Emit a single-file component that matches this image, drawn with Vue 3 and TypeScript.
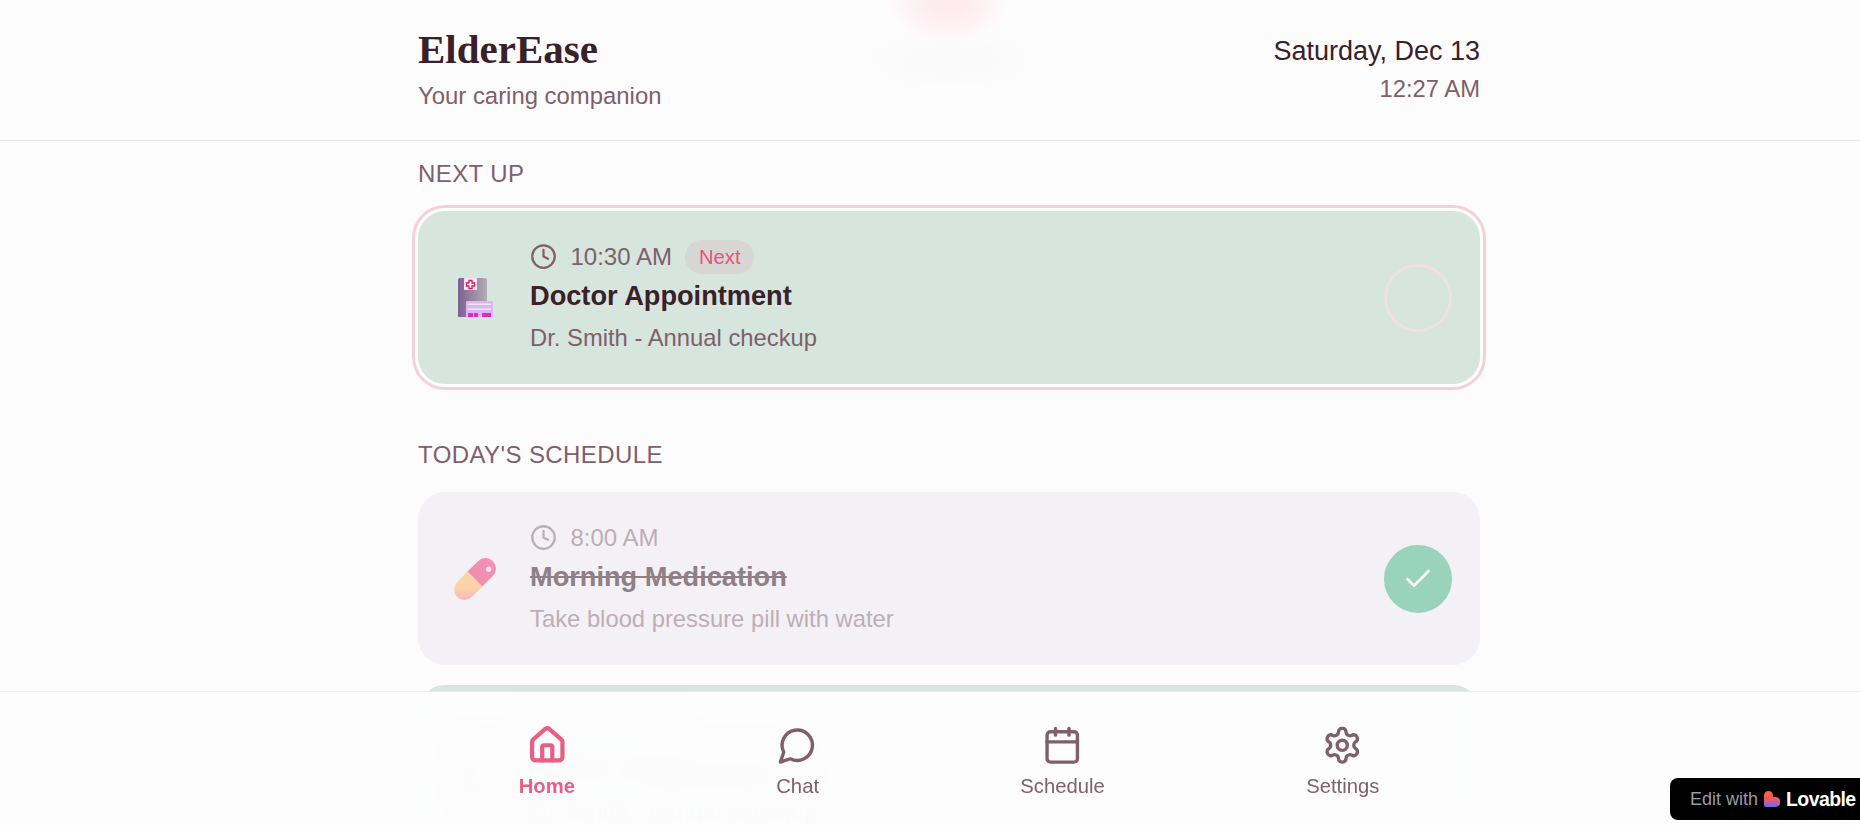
<script setup lang="ts">
interface Task {
  id: number
  time: string
  title: string
  note: string
  icon: 'hospital' | 'pill'
  done?: boolean
  next?: boolean
}

const nextUp: Task = {
  id: 2,
  time: '10:30 AM',
  title: 'Doctor Appointment',
  note: 'Dr. Smith - Annual checkup',
  icon: 'hospital',
  next: true
}

const sections: { label: string; tasks: Task[] }[] = [
  { label: 'Next up', tasks: [nextUp] },
  {
    label: "Today's schedule",
    tasks: [
      {
        id: 1,
        time: '8:00 AM',
        title: 'Morning Medication',
        note: 'Take blood pressure pill with water',
        icon: 'pill',
        done: true
      },
      { ...nextUp, next: false }
    ]
  }
]

const navItems = [
  { label: 'Home', active: true },
  { label: 'Chat', active: false },
  { label: 'Schedule', active: false },
  { label: 'Settings', active: false }
]
</script>

<template>
  <div class="page">
    <header class="top">
      <span class="blur-pink"></span>
      <span class="blur-grey"></span>
      <div class="column top-row">
        <div>
          <h1 class="brand">ElderEase</h1>
          <p class="tagline">Your caring companion</p>
        </div>
        <div class="clock-box">
          <div class="date">Saturday, Dec 13</div>
          <div class="now">12:27 AM</div>
        </div>
      </div>
    </header>

    <main class="column content">
      <section v-for="section in sections" :key="section.label" class="section">
        <h2 class="section-title">{{ section.label }}</h2>
        <div class="task-list">
          <article
            v-for="task in section.tasks"
            :key="task.id"
            class="task"
            :class="{ 'is-done': task.done, 'is-next': task.next }"
          >
            <div class="task-icon">
              <svg v-if="task.icon === 'hospital'" width="35" height="39" viewBox="0 0 35 39">
                <defs>
                  <linearGradient id="bldg" x1="0" y1="0" x2="1" y2="0">
                    <stop offset="0" stop-color="#7d5f92" />
                    <stop offset="1" stop-color="#b3acb2" />
                  </linearGradient>
                </defs>
                <path d="M2 0h25a2 2 0 0 1 2 2v37H0V2a2 2 0 0 1 2-2z" fill="url(#bldg)" />
                <rect x="6" y="0" width="13" height="12" rx="1" fill="#f6e4f0" />
                <path d="M11 2.500h3v2.500h2.500v3H14v2.500h-3V8H8.500V5H11z" fill="#fff" stroke="#e0155f" stroke-width="1.300" />
                <path d="M8 24a1 1 0 0 1 1-1h25a1 1 0 0 1 1 1v15H8z" fill="#dcb6f2" />
                <rect x="10" y="25.500" width="23" height="1.500" fill="#f3e6fb" />
                <rect x="10" y="30.500" width="23" height="1.500" fill="#f3e6fb" />
                <rect x="10" y="35" width="5" height="4" fill="#e22cb4" />
                <rect x="16" y="35" width="4" height="4" fill="#e22cb4" />
                <rect x="24" y="35" width="9" height="4" fill="#e22cb4" />
              </svg>
              <svg v-else width="42" height="42" viewBox="0 0 40 40">
                <defs>
                  <linearGradient id="pillLow" x1="1" y1="0" x2="0" y2="1">
                    <stop offset="0.500" stop-color="#fbd3a6" />
                    <stop offset="1" stop-color="#fda9bd" />
                  </linearGradient>
                  <linearGradient id="pillHigh" x1="0" y1="0" x2="1" y2="0">
                    <stop offset="0" stop-color="#ee8fae" />
                    <stop offset="1" stop-color="#f88cba" />
                  </linearGradient>
                </defs>
                <g transform="rotate(-45 20 20)">
                  <path d="M20 10H6a10 10 0 0 0 0 20h14z" fill="url(#pillLow)" />
                  <path d="M20 10h14a10 10 0 0 1 0 20H20z" fill="url(#pillHigh)" />
                </g>
                <circle cx="33" cy="10.700" r="2.500" fill="#ffe3ee" />
              </svg>
            </div>

            <div class="task-body">
              <div class="task-time">
                <svg class="clock" width="27" height="27" viewBox="0 0 24 24">
                  <circle cx="12" cy="12" r="10" />
                  <polyline points="12 6 12 12 16 14" />
                </svg>
                <span>{{ task.time }}</span>
                <span v-if="task.next" class="badge">Next</span>
              </div>
              <h3 class="task-title">{{ task.title }}</h3>
              <p class="task-note">{{ task.note }}</p>
            </div>

            <button class="check" type="button" :aria-label="'Complete ' + task.title">
              <svg v-if="task.done" width="32" height="32" viewBox="0 0 24 24">
                <path d="M20 6 9 17l-5-5" />
              </svg>
            </button>
          </article>
        </div>
      </section>
    </main>

    <nav class="bottom">
      <div class="column nav-row">
        <a v-for="item in navItems" :key="item.label" class="nav-item" :class="{ active: item.active }">
          <svg width="40.500" height="40.500" viewBox="0 0 24 24">
            <template v-if="item.label === 'Home'">
              <path d="M15 21v-8a1 1 0 0 0-1-1h-4a1 1 0 0 0-1 1v8" />
              <path d="M3 10a2 2 0 0 1 .709-1.528l7-5.999a2 2 0 0 1 2.582 0l7 5.999A2 2 0 0 1 21 10v9a2 2 0 0 1-2 2H5a2 2 0 0 1-2-2z" />
            </template>
            <path v-else-if="item.label === 'Chat'" d="M7.900 20A9 9 0 1 0 4 16.100L2 22Z" />
            <template v-else-if="item.label === 'Schedule'">
              <path d="M8 2v4" />
              <path d="M16 2v4" />
              <rect x="3" y="4" width="18" height="18" rx="2" />
              <path d="M3 10h18" />
            </template>
            <template v-else>
              <path d="M12.220 2h-.44a2 2 0 0 0-2 2v.18a2 2 0 0 1-1 1.730l-.43.25a2 2 0 0 1-2 0l-.15-.08a2 2 0 0 0-2.730.73l-.22.38a2 2 0 0 0 .73 2.730l.15.1a2 2 0 0 1 1 1.720v.51a2 2 0 0 1-1 1.740l-.15.09a2 2 0 0 0-.73 2.730l.22.38a2 2 0 0 0 2.730.73l.15-.08a2 2 0 0 1 2 0l.43.25a2 2 0 0 1 1 1.730V20a2 2 0 0 0 2 2h.44a2 2 0 0 0 2-2v-.18a2 2 0 0 1 1-1.730l.43-.25a2 2 0 0 1 2 0l.15.08a2 2 0 0 0 2.730-.73l.22-.39a2 2 0 0 0-.73-2.730l-.15-.08a2 2 0 0 1-1-1.740v-.5a2 2 0 0 1 1-1.740l.15-.09a2 2 0 0 0 .73-2.730l-.22-.38a2 2 0 0 0-2.730-.73l-.15.08a2 2 0 0 1-2 0l-.43-.25a2 2 0 0 1-1-1.730V4a2 2 0 0 0-2-2z" />
              <circle cx="12" cy="12" r="3" />
            </template>
          </svg>
          <span>{{ item.label }}</span>
        </a>
      </div>
    </nav>

    <a class="edit-with">
      <span>Edit with</span>
      <svg width="16" height="16" viewBox="0 0 16 16">
        <defs>
          <linearGradient id="lov" x1="0" y1="0" x2="0" y2="1">
            <stop offset="0" stop-color="#ff6a1f" />
            <stop offset="0.500" stop-color="#f5536c" />
            <stop offset="1" stop-color="#6a6cf0" />
          </linearGradient>
        </defs>
        <path d="M4.500 0A4.500 4.500 0 0 1 9 4.500V6h2.500a4.500 4.500 0 0 1 0 10H2a2 2 0 0 1-2-2V4.500A4.500 4.500 0 0 1 4.500 0z" fill="url(#lov)" />
      </svg>
      <strong>Lovable</strong>
    </a>
  </div>
</template>

<style scoped>
.page {
  height: 825px;
  overflow: hidden;
  position: relative;
  background: #fdfcfd;
  color: #3a2028;
  font-family: "Liberation Sans", Arial, sans-serif;
}

.column {
  width: 1062px;
  margin-left: 418px;
}

.top {
  position: relative;
  height: 140px;
  border-bottom: 1px solid #eee2e8;
  overflow: hidden;
}

.blur-pink {
  position: absolute;
  left: 885px;
  top: -50px;
  width: 126px;
  height: 96px;
  background: radial-gradient(closest-side, #fdebef 30%, rgba(253, 235, 239, 0));
}

.blur-grey {
  position: absolute;
  left: 870px;
  top: 30px;
  width: 160px;
  height: 60px;
  background: radial-gradient(closest-side, #fbfafb 60%, rgba(251, 250, 251, 0));
}

.top-row {
  position: relative;
  display: flex;
  justify-content: space-between;
  padding-top: 27px;
}

.brand {
  margin: 0;
  font-family: "Liberation Serif", "Times New Roman", serif;
  font-size: 41px;
  line-height: 45px;
  font-weight: 700;
}

.tagline {
  margin: 10px 0 0;
  font-size: 23.9px;
  line-height: 27px;
  color: #7f5f6b;
}

.clock-box {
  text-align: right;
}

.date {
  margin-top: 8px;
  font-size: 27px;
  line-height: 33px;
}

.now {
  margin-top: 7px;
  font-size: 23.8px;
  line-height: 27px;
  color: #7f5f6b;
}

.content {
  padding-top: 17px;
}

.section + .section {
  margin-top: 55px;
}

.section-title {
  margin: 0 0 22px;
  font-size: 24px;
  line-height: 31px;
  font-weight: 400;
  letter-spacing: 0.4px;
  text-transform: uppercase;
  color: #7f5f6b;
}

.task-list {
  display: flex;
  flex-direction: column;
  gap: 20px;
}

.task {
  display: flex;
  align-items: center;
  gap: 24px;
  height: 173px;
  box-sizing: border-box;
  padding: 0 28px 0 26px;
  border-radius: 27px;
  background: #d6e5dd;
}

.task.is-next {
  box-shadow: 0 0 0 3px #fff, 0 0 0 6px #f5d0dc;
}

.task.is-done {
  background: #f3f1f6;
}

.task-icon {
  flex: 0 0 62px;
  display: flex;
  justify-content: center;
}

.task-body {
  flex: 1;
  min-width: 0;
  padding-bottom: 1.5px;
}

.task-time {
  display: flex;
  align-items: center;
  gap: 13.5px;
  height: 34px;
  font-size: 24px;
  color: #7f5f6b;
}

.clock {
  fill: none;
  stroke: currentColor;
  stroke-width: 2;
  stroke-linecap: round;
  stroke-linejoin: round;
}

.badge {
  padding: 0 13.5px;
  line-height: 34px;
  border-radius: 17px;
  background: #d6d6d4;
  color: #e8517f;
  font-size: 20.25px;
}

.task-title {
  margin: 5.5px 0 0;
  font-size: 27.2px;
  line-height: 34px;
  font-weight: 700;
}

.task-note {
  margin: 9px 0 0;
  font-size: 23.8px;
  line-height: 32px;
  color: #7f5f6b;
}

.is-done .task-time,
.is-done .task-note {
  color: #bfadb5;
}

.is-done .task-title {
  color: #8f8086;
  text-decoration: line-through;
}

.check {
  flex: none;
  display: flex;
  align-items: center;
  justify-content: center;
  width: 68px;
  height: 68px;
  padding: 0;
  border: 3px solid #f0dfe7;
  border-radius: 50%;
  background: transparent;
}

.is-done .check {
  border-color: #9ad3bb;
  background: #9ad3bb;
}

.check svg {
  fill: none;
  stroke: #fff;
  stroke-width: 2;
  stroke-linecap: round;
  stroke-linejoin: round;
}

.bottom {
  position: absolute;
  left: 0;
  right: 0;
  top: 691px;
  bottom: 0;
  border-top: 1px solid rgba(240, 200, 215, 0.5);
  background: rgba(253, 253, 253, 0.97);
  backdrop-filter: blur(20px);
}

.nav-row {
  display: flex;
  justify-content: space-around;
  padding-top: 33px;
}

.nav-item {
  display: flex;
  flex-direction: column;
  align-items: center;
  gap: 7px;
  font-size: 20.25px;
  line-height: 27px;
  color: #7f5f6b;
}

.nav-item svg {
  fill: none;
  stroke: currentColor;
  stroke-width: 2;
  stroke-linecap: round;
  stroke-linejoin: round;
}

.nav-item.active {
  color: #e75f84;
  font-weight: 700;
}

.nav-item.active svg {
  stroke-width: 2.500;
}

.edit-with {
  position: absolute;
  right: 0;
  top: 778px;
  width: 190px;
  height: 42px;
  box-sizing: border-box;
  padding-left: 20px;
  display: flex;
  align-items: center;
  gap: 6px;
  border-radius: 8px 0 0 8px;
  background: #000;
  color: #9a9aa2;
  font-size: 18px;
}

.edit-with strong {
  color: #fff;
  font-size: 19.5px;
  letter-spacing: -0.6px;
}
</style>
